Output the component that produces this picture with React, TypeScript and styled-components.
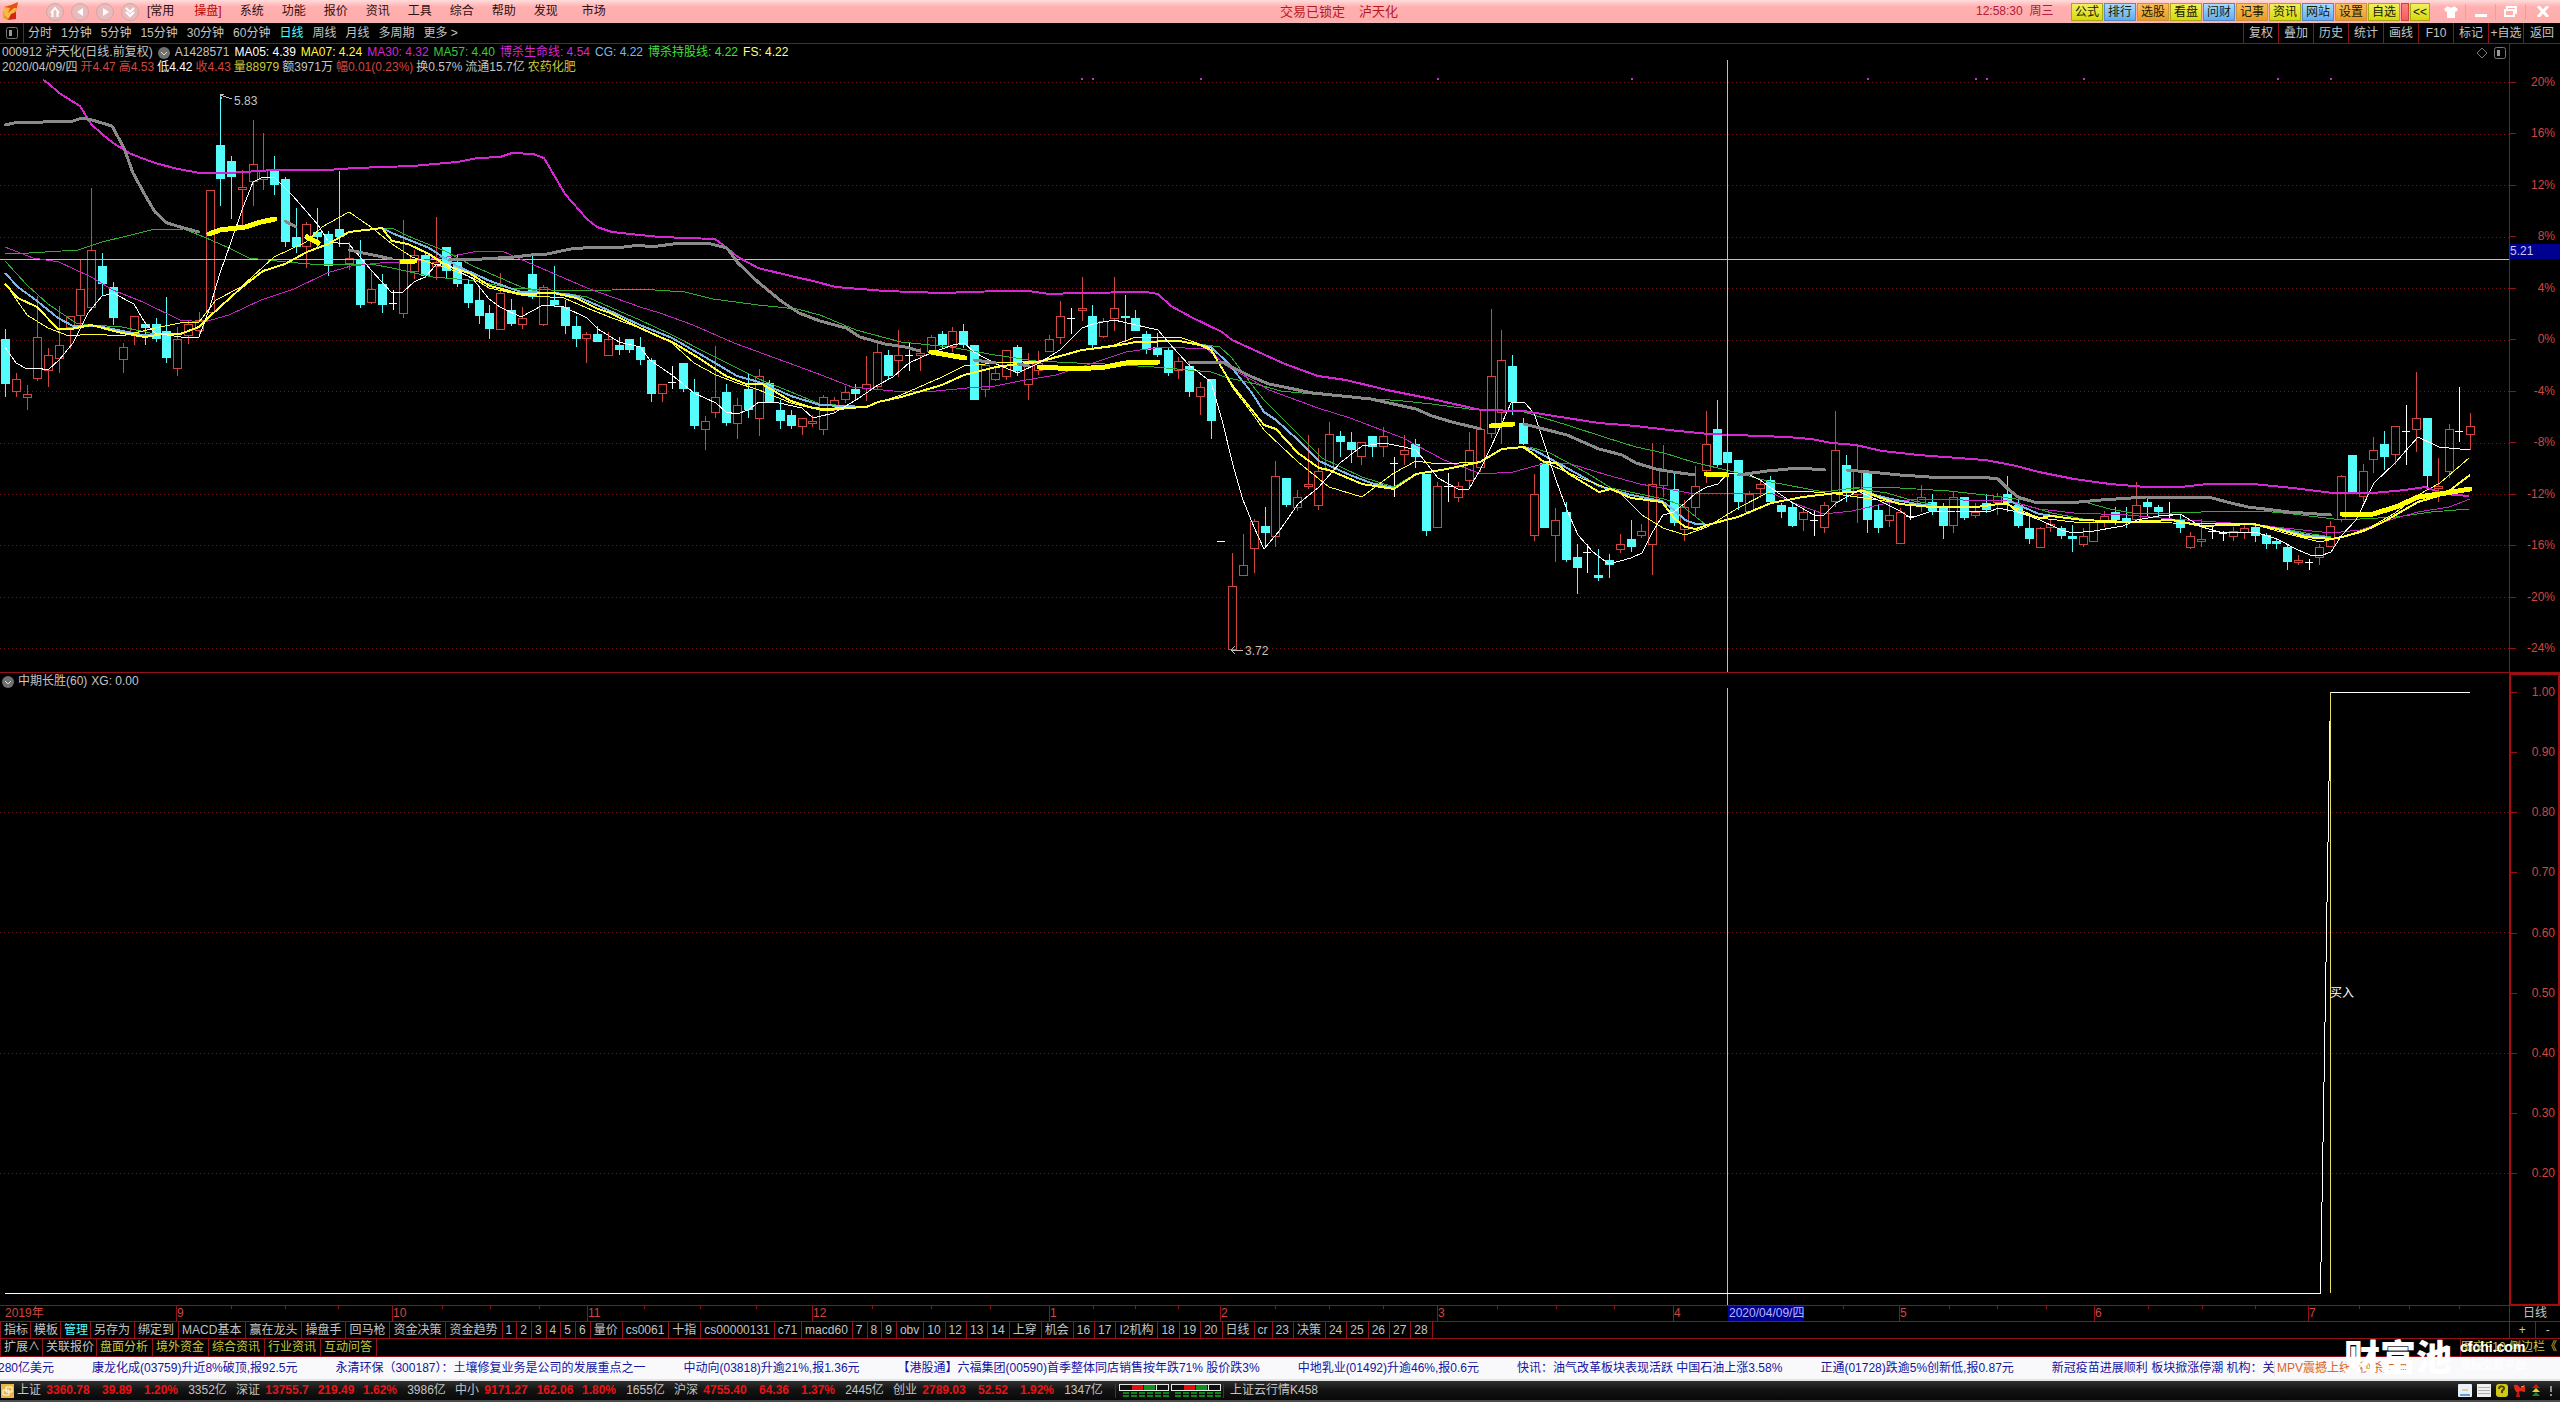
import React from 'react';
import styled, { createGlobalStyle, css } from 'styled-components';

const C = {
  line: '#941018',
  frame: '#a80c10',
  axis: '#d04640',
  text: '#c4c4c4',
  cyan: '#54fcfc',
  red: '#d04640',
  yellow: '#ffff38',
  olive: '#c8c840',
  magenta: '#d428d4',
  green: '#3cc83c',
  blue: '#7cb8e8',
  gray: '#8a8a8a',
};

const GlobalStyle = createGlobalStyle`
  * { box-sizing: border-box; }
  body {
    margin: 0;
    background: #000;
    color: ${C.text};
    font: 12px/15px "Liberation Sans", "Noto Sans CJK SC", sans-serif;
    overflow: hidden;
  }
  button {
    border: 0;
    padding: 0;
    margin: 0;
    background: none;
    color: inherit;
    font: inherit;
    white-space: nowrap;
  }
`;

const Shell = styled.div`
  display: flex;
  flex-direction: column;
  height: 100vh;
  white-space: nowrap;
`;

/* ---------- title bar ---------- */

const TitleBar = styled.header`
  display: flex;
  align-items: center;
  flex: none;
  height: 23px;
  padding-left: 2px;
  background: linear-gradient(#ffdcdc, #ffb0b0 30%, #ffadad 80%, #f4b4b4);
  color: #301010;
`;

const NavIcons = styled.div`
  display: flex;
  gap: 7px;
  margin: 0 8px 0 27px;
`;

const RoundButton = styled.button`
  display: flex;
  width: 18px;
  height: 18px;
  border-radius: 9px;
  background: #e8bcbc;
  border: 1px solid #d8a4a4;
`;

const Menu = styled.nav`
  display: flex;
  gap: 18px;
  flex: 1;
`;

const MenuItem = styled.button<{ $active?: boolean }>`
  color: ${(p) => (p.$active ? '#b80808' : '#301010')};
  &:first-child { margin-right: 2px; }
  &:last-child { margin-left: 6px; }
`;

const Caption = styled.div`
  display: flex;
  gap: 14px;
  flex: 0 0 696px;
  color: #b81820;
  font-size: 13px;
`;

const Clock = styled.time`
  flex: none;
  width: 95px;
  color: #b02038;
  font-size: 12px;
`;

const Tools = styled.div`
  display: flex;
  gap: 1px;
`;

const toolColor = {
  y: ['#f0f060', '#d8d810', '#a8a810'],
  b: ['#a8dcff', '#60acf0', '#5888c0'],
  o: ['#f8c060', '#e89c20', '#d09040'],
  r: ['#ff8080', '#f06060', '#d04040'],
};

const Tool = styled.button<{ $tone: keyof typeof toolColor; $width?: number }>`
  width: ${(p) => p.$width ?? 32}px;
  height: 18px;
  line-height: 17px;
  border: 1px solid ${(p) => toolColor[p.$tone][2]};
  background: linear-gradient(${(p) => toolColor[p.$tone][0]}, ${(p) => toolColor[p.$tone][1]});
  color: #181800;
`;

const WindowButtons = styled.div`
  display: flex;
  margin-left: 6px;
`;

const WindowButton = styled.button`
  display: flex;
  align-items: center;
  justify-content: center;
  width: 30px;
  height: 16px;
  border-right: 1px solid #e8a0a4;
  &:last-child { width: 34px; border: 0; }
`;

/* ---------- period bar ---------- */

const PeriodBar = styled.div`
  display: flex;
  flex: none;
  height: 21px;
  border-bottom: 1px solid ${C.line};
`;

const PanelToggle = styled.button`
  display: flex;
  align-items: center;
  justify-content: center;
  width: 24px;
  border: solid ${C.line};
  border-width: 0 1px 0 0;
`;

const Periods = styled.div`
  display: flex;
  gap: 9px;
  flex: 1;
  padding-left: 4px;
`;

const Period = styled.button<{ $active?: boolean }>`
  color: ${(p) => (p.$active ? C.cyan : C.text)};
`;

const SideCell = styled.button`
  width: 35px;
  border-left: 1px solid ${C.line};
  &:last-child { width: 37px; }
`;

/* ---------- charts ---------- */

const Charts = styled.main`
  display: grid;
  grid-template: minmax(0, 629fr) minmax(0, 632fr) / minmax(0, 1fr) 51px;
  flex: 1;
  min-height: 0;
`;

const Plot = styled.section<{ $line?: boolean }>`
  position: relative;
  min-height: 0;
  border-bottom: ${(p) => (p.$line ? 1 : 0)}px solid ${C.line};
`;

const PlotSvg = styled.svg`
  display: block;
  width: 100%;
  height: 100%;
`;

const Info = styled.div`
  position: absolute;
  top: 1px;
  left: 2px;
`;

const InfoLine = styled.div<{ $gap: number }>`
  display: flex;
  align-items: center;
  gap: ${(p) => p.$gap}px;
`;

const Tint = styled.span<{ $color: string }>`
  color: ${(p) => p.$color};
`;

const PlotButtons = styled.div`
  position: absolute;
  top: 3px;
  right: 3px;
  display: flex;
  gap: 6px;
`;

const Scale = styled.ol<{ $lower?: boolean }>`
  position: relative;
  display: flex;
  flex-direction: column;
  justify-content: space-between;
  margin: 0;
  padding: 31px 5px 16px 0;
  list-style: none;
  color: ${C.axis};
  border: solid ${C.line};
  border-width: 0 0 1px 1px;
  ${(p) =>
    p.$lower &&
    css`
      border: 2px solid ${C.frame};
      border-bottom-width: 1px;
      padding: 10px 3px 123px 0;
    `}
`;

const ScaleMark = styled.li`
  display: flex;
  align-items: center;
  justify-content: space-between;
  &::before {
    content: '';
    width: 6px;
    height: 1px;
    background: ${C.line};
  }
`;

const PriceTag = styled.output`
  position: absolute;
  top: 200px;
  left: 0;
  width: 50px;
  height: 15px;
  background: #000090;
  color: #c8c8ff;
`;

/* ---------- date axis ---------- */

const DateBar = styled.div`
  position: relative;
  display: flex;
  flex: none;
  height: 17px;
  border: solid ${C.line};
  border-width: 1px 0;
`;

const Months = styled.div`
  display: grid;
  grid-template-columns: 176fr 216fr 195fr 225fr 237fr 171fr 217fr 236fr 226fr 195fr 214fr 201fr;
  flex: 1;
`;

const Month = styled.div<{ $first?: boolean }>`
  display: grid;
  grid-template-columns: repeat(4, 1fr);
  border-left: ${(p) => (p.$first ? 0 : 1)}px solid ${C.line};
  padding-left: ${(p) => (p.$first ? 5 : 0)}px;
  color: ${C.axis};
`;

const Week = styled.i`
  height: 3px;
  border-left: 1px solid ${C.line};
`;

const CursorDate = styled.output`
  position: absolute;
  left: 67.5%;
  top: 0;
  height: 15px;
  padding-left: 1px;
  background: #000090;
  color: #b8b8ff;
`;

const Corner = styled.div`
  display: flex;
  width: 51px;
  border-left: 1px solid ${C.line};
  > * {
    flex: 1;
    text-align: center;
  }
  > * + * {
    border-left: 1px solid ${C.line};
  }
`;

/* ---------- tab rows ---------- */

const TabRow = styled.div<{ $height: number }>`
  display: flex;
  flex: none;
  height: ${(p) => p.$height}px;
  border-bottom: 1px solid ${C.line};
`;

const Tabs = styled.div`
  display: flex;
  flex: 1;
  border-left: 1px solid ${C.line};
`;

const Tab = styled.button<{ $color?: string; $tight?: boolean }>`
  padding: 0 ${(p) => (p.$tight ? 2 : 4)}px 0 3px;
  border-right: 1px solid ${C.line};
  color: ${(p) => p.$color ?? C.text};
`;

const SideTab = styled.button`
  width: 100px;
  border-left: 1px solid ${C.line};
  color: ${C.olive};
  text-align: left;
`;

/* ---------- ticker and status ---------- */

const Ticker = styled.div`
  display: flex;
  flex: none;
  height: 24px;
  align-items: center;
  border-bottom: 2px solid #e4e4e4;
  background: #f9f9fb;
  color: #1414a0;
`;

const News = styled.div`
  display: flex;
  gap: 38px;
  flex: 1 1 0;
  min-width: 0;
  margin-left: -2px;
  overflow: hidden;
`;

const NewsLink = styled.a`
  color: inherit;
  text-decoration: none;
`;

const Promo = styled.div`
  display: flex;
  gap: 8px;
  width: 286px;
  padding-left: 2px;
  border-left: 1px solid #e0e0e0;
  color: #d86428;
`;

const StatusBar = styled.footer`
  display: flex;
  flex: none;
  align-items: center;
  height: 21px;
  border-bottom: 2px solid #4c4c4c;
  background: linear-gradient(#303030, #141414 45%, #080808);
`;

const IndexQuote = styled.div`
  display: grid;
  grid-template-columns: 28px 46px 52px 36px 57px;
  text-align: center;
  > :first-child { text-align: left; }
`;

const Up = styled.b`
  color: #e81414;
`;

const Heat = styled.div`
  display: flex;
  gap: 2px;
  margin: 0 6px 0 3px;
  padding: 0 2px 0 3px;
  border: solid #383838;
  border-width: 0 1px;
`;

const Tray = styled.div`
  display: flex;
  align-items: center;
  gap: 5px;
  margin-left: auto;
  padding-right: 4px;
`;

const Watermark = styled.div`
  position: absolute;
  right: 33px;
  bottom: 26px;
  display: flex;
  gap: 8px;
  color: #fff;
  font-weight: 900;
  pointer-events: none;
`;

const Brand = styled.span`
  font: 900 36px/42px "Noto Sans CJK SC", sans-serif;
`;

const BrandSite = styled.span`
  display: flex;
  flex-direction: column;
  width: 67px;
  padding-top: 4px;
  font-size: 14px;
  line-height: 18px;
  small {
    font-size: 11px;
    font-weight: 400;
  }
`;

/* ---------- data ---------- */

/* One candle per trading day: kind, high, body top, body bottom, low.
   r = rising (hollow), c = falling (solid), w = unchanged, d = limit without trades. */
const CANDLES = `
c,329,339,384,397 r,373,379,392,397 r,385,394,398,410 r,296,337,379,381 r,348,355,371,387 r,306,345,359,373
r,316,316,328,349 r,260,289,316,327 r,188,250,308,310 c,253,266,284,295 c,282,287,318,325 r,343,347,360,373
r,316,316,334,345 c,322,324,328,345 c,318,324,339,342 c,297,331,358,363 r,327,339,369,376 r,320,324,336,344
r,312,320,331,337 r,190,190,313,313 c,95,145,179,206 c,156,161,177,219 r,170,187,190,225 r,120,164,182,206
r,133,170,180,190 c,156,169,185,195 c,177,179,242,247 c,208,237,247,253 r,222,224,247,268 c,208,232,237,247
c,231,234,266,276 c,171,229,237,247 r,242,258,264,270 c,240,259,305,308 r,270,289,303,304 c,274,284,305,313
w,290,303,303,310 r,220,259,314,318 r,250,255,272,279 c,252,255,276,278 r,217,262,267,280 c,247,247,271,279
c,254,262,284,287 c,280,284,303,308 c,288,300,316,324 c,305,313,329,339 r,273,293,330,330 c,299,310,324,326
r,307,318,325,329 c,256,274,297,299 r,285,287,325,326 c,266,300,305,306 c,300,307,326,334 c,316,326,339,347
r,332,334,339,363 c,326,334,342,342 r,332,339,356,356 c,337,345,350,355 c,339,339,350,353 c,337,347,360,365
c,358,360,394,402 r,384,384,394,402 w,366,382,382,389 c,363,363,389,392 c,379,392,426,429 r,416,421,430,450
r,346,397,413,418 c,384,392,423,426 r,398,405,424,439 c,373,389,410,418 r,369,376,419,436 c,380,383,402,403
c,400,410,421,429 c,410,415,426,429 r,418,418,427,435 r,415,421,424,427 r,395,397,430,435 r,397,400,406,413
r,386,392,400,403 c,384,389,394,400 r,356,384,389,401 r,340,352,387,390 c,350,355,376,379 r,330,355,361,377
w,342,355,355,371 r,348,353,356,371 r,335,337,352,353 c,331,334,345,348 r,327,331,347,352 c,324,331,345,348
c,345,345,400,400 r,360,365,390,397 r,368,373,380,381 r,350,350,377,380 c,345,347,371,376 r,353,363,385,400
r,351,363,371,375 r,335,339,352,352 r,301,316,338,344 w,308,318,318,334 r,277,308,311,321 c,305,316,345,348
r,318,321,337,338 r,277,308,319,331 c,295,316,318,342 c,310,318,331,331 c,331,334,350,354 c,333,347,355,357
c,348,350,373,376 r,357,361,371,379 c,362,366,392,397 r,382,387,397,415 c,379,379,421,439 d,541,541,541,541
r,553,586,650,650 r,534,565,576,576 r,519,521,549,573 c,507,526,533,548 r,461,476,537,547 c,478,478,505,507
r,490,497,508,511 r,435,484,486,489 r,448,471,506,510 r,422,434,471,471 c,431,436,442,457 c,432,442,450,463
r,442,442,457,465 c,436,436,447,457 r,427,436,447,457 w,457,463,463,497 r,435,450,455,465 c,439,444,457,468
c,474,474,531,536 r,482,486,528,528 w,473,486,486,502 r,482,486,498,502 r,432,450,481,488 r,410,429,468,472
r,309,376,434,438 r,330,360,413,444 c,355,366,402,415 c,418,423,444,445 r,474,494,536,541 c,463,463,528,528
r,508,520,536,562 c,502,512,560,562 c,544,557,568,594 w,544,552,552,573 c,549,575,578,581 c,554,560,565,578
r,534,544,550,553 c,520,539,547,552 r,524,531,536,538 r,443,484,545,575 r,445,471,486,497 c,472,489,523,526
r,500,507,530,541 r,466,486,508,517 r,411,444,471,483 c,400,429,465,467 c,433,452,463,464 c,460,460,502,510
r,491,494,512,514 r,480,484,489,498 c,476,480,502,503 c,503,505,512,518 c,503,507,526,527 r,510,512,520,531
w,511,520,520,536 r,502,505,528,533 r,411,450,502,507 c,455,465,492,502 r,444,470,495,523 c,471,472,520,533
c,505,510,528,533 r,503,515,521,527 r,508,512,544,544 w,502,516,516,520 r,485,497,505,512 c,494,502,511,515
c,503,507,526,539 r,491,497,526,533 c,497,497,518,520 r,503,512,516,518 c,494,503,510,513 r,493,496,503,515
c,476,494,503,512 c,495,505,526,528 c,514,528,539,544 r,527,528,548,548 r,520,524,528,532 c,526,528,536,539
c,525,536,539,552 r,528,536,545,547 r,520,522,542,542 r,511,516,523,527 c,507,512,520,525 c,507,518,523,528
r,482,505,520,522 c,498,502,507,516 c,505,507,512,516 w,502,515,515,518 c,515,519,528,533 r,532,536,548,549
r,519,539,542,547 w,527,531,531,539 w,531,533,533,541 r,527,531,537,541 r,523,528,533,539 c,525,527,536,542
c,533,535,544,549 c,538,541,544,549 c,544,547,562,570 r,555,560,563,565 w,559,562,562,570 r,544,547,558,565
r,521,526,547,547 r,475,476,520,522 c,455,455,492,492 r,464,471,497,502 r,437,450,460,473 c,431,444,457,470
r,426,426,455,465 w,405,431,431,465 r,372,418,430,452 c,418,418,476,487 r,458,486,488,502 r,424,429,472,478
w,387,431,431,442 r,413,426,435,450`
  .trim()
  .split(/\s+/)
  .map((row) => {
    const [kind, ...v] = row.split(',');
    const [high, top, bottom, low] = v.map(Number);
    return { kind, high, top, bottom, low };
  });

const LINES: { color: string; width: number; points: string[] }[] = [
  {
    color: '#30b030',
    width: 1,
    points: [
      '5,254 29,253 78,250 102,242 127,236 151,230 184,229 204,237 229,248 249,258 286,262 310,264 371,264 392,268 433,277 469,280 510,288 551,290 571,291 612,290 640,289 685,292 713,299 758,305 797,309 820,315 856,330 901,342 950,347 995,355 1036,361 1077,363 1105,364 1154,367 1211,372 1228,378 1252,383 1281,391 1322,395 1403,401 1432,404 1469,409 1481,410 1524,412 1567,425 1607,438 1636,447 1664,453 1693,462 1730,471 1771,482 1824,492 1860,487 1900,488 1949,491 1994,496 2030,501 2061,502 2088,503 2110,509 2132,513 2172,513 2231,511 2262,511 2293,514 2342,520 2396,517 2431,512 2469,509',
    ],
  },
  {
    color: '#30b030',
    width: 1,
    points: [
      '5,261 27,285 48,304 76,323 91,325 122,327 155,334',
      '382,228 392,228 408,236 445,251 473,266 521,287 543,293 564,293 587,297 612,308 640,320 672,335 705,352 759,379 791,392 820,404 867,407',
      '1179,341 1220,347 1232,358 1252,385 1264,400 1287,423 1322,458 1362,477 1394,487 1410,477',
      '1530,447 1550,453 1587,473 1611,488 1664,499 1681,505 1696,517 1705,524',
      '1852,488 1887,493 1914,501 1931,504',
      '2007,500 2052,513 2083,519',
      '2262,525 2306,533 2331,537',
    ],
  },
  {
    color: '#c028c0',
    width: 1,
    points: [
      '5,247 33,258 59,262 91,277 113,290 143,302 180,320 204,322 229,315 261,300 294,289 327,273 351,266 380,263 408,262 447,257 473,252 502,251 527,262 564,278 587,288 640,307 660,313 693,325 734,343 775,358 816,373 852,387 893,391 926,392 967,388 995,386 1020,381 1056,375 1093,363 1126,352 1162,347 1207,349 1228,367 1252,380 1269,390 1318,408 1350,418 1403,438 1444,460 1481,474 1513,472 1546,463 1571,464 1607,475 1640,484 1689,493 1771,493 1799,505 1824,514 1852,511 1887,503 1918,499 1963,500 2007,500 2039,509 2074,513 2128,515 2172,519 2231,523 2275,527 2331,533 2360,530 2396,518 2418,512 2449,507 2470,499',
    ],
  },
  {
    color: C.blue,
    width: 2,
    points: [
      '5,273 18,287 37,301 58,318 73,326 98,326 122,331 143,335 160,334',
      '382,228 392,233 429,248 457,266 490,281 521,292 555,293 576,296 608,310 640,325 672,338 705,357 737,376 759,382 791,396 820,405 867,407',
      '1179,341 1211,347 1228,363 1252,393 1264,412 1276,420 1298,440 1319,461 1350,475 1371,483 1394,488',
      '1524,447 1534,450 1567,468 1599,486 1631,495 1662,501 1674,510 1685,520 1696,524 1705,524',
      '1860,490 1882,497 1911,503 1931,506',
      '2007,500 2039,514 2061,517',
      '2275,528 2306,535 2331,538',
    ],
  },
  {
    color: C.yellow,
    width: 1,
    points: [
      '5,283 27,315 48,328 69,336 91,334 122,336 155,328 180,323 199,322 216,300 241,287 274,257 306,242 322,227 349,212 371,227 392,244 412,257 447,268 473,278 489,288 521,295 564,298 587,308 612,318 640,328 672,343 694,363 716,375 737,383 759,390 791,403 824,411 864,407 901,395 942,377 964,366 996,363 1039,361 1082,350 1114,345 1136,337 1179,337 1211,348 1232,387 1252,413 1264,430 1298,462 1329,487 1362,497 1394,473 1416,461 1438,464 1480,462 1502,449 1522,447 1546,463 1578,477 1620,493 1642,515 1663,528 1685,535 1707,527 1738,508 1771,491 1803,491 1836,494 1878,500 1911,505 1955,508 2007,504 2039,518 2074,522 2128,522 2172,523 2253,524 2284,533 2320,542 2342,537 2369,528 2395,513 2418,495 2440,483 2469,458',
    ],
  },
  {
    color: C.yellow,
    width: 2,
    points: [
      '5,284 18,298 37,307 58,329 71,329 91,325 122,333 145,337 163,334 180,334 199,327 209,317 241,288 263,271 285,264 307,252 328,244 349,232 382,228 392,241 408,244 429,254 447,266 469,273 490,286 521,294 554,293 576,298 598,309 608,312 640,328 660,337 672,342 694,355 726,376 746,384 762,384 791,401 813,408 824,409 867,407 878,402 901,397 942,385 964,375 996,367 1018,364 1039,362 1082,350 1114,346 1136,342 1179,341 1200,345 1211,350 1232,385 1264,425 1276,429 1298,453 1319,468 1329,470 1362,484 1394,489 1416,474 1447,469 1480,462 1502,449 1524,447 1544,462 1556,463 1569,474 1599,492 1611,489 1631,498 1662,502 1674,518 1685,527 1696,529 1707,525 1738,517 1771,503 1803,497 1836,493 1864,491 1878,497 1900,504 1931,507 1976,507 2007,503 2018,512 2040,518 2051,516 2083,520 2128,522 2172,520 2202,526 2253,524 2277,529 2306,537 2331,539 2342,537 2364,531 2385,521 2418,502 2445,494 2470,475',
    ],
  },
  {
    color: '#ffffff',
    width: 1,
    points: [
      '5,347 16,363 27,369 37,368 48,370 59,360 73,343 88,313 102,296 113,293 134,304 145,323 155,333 167,335 188,338 199,337 209,310 220,273 231,242 242,210 253,182 263,177 274,177 292,195 307,212 318,225 328,241 338,243 349,244 360,257 371,270 392,293 403,292 414,282 425,277 436,265 445,263 457,270 473,279 489,299 500,307 521,317 543,305 564,307 587,318 598,329 619,342 640,347 650,360 672,375 694,393 716,403 726,412 737,414 748,410 759,402 779,403 802,408 813,418 834,413 856,400 878,385 893,377 909,363 931,353 953,345 964,343 974,352 996,364 1018,373 1039,363 1060,350 1082,328 1093,324 1114,320 1136,325 1158,330 1169,343 1189,365 1211,382 1222,420 1233,465 1243,500 1254,527 1264,549 1280,530 1298,504 1319,487 1340,463 1362,446 1384,443 1404,447 1416,450 1438,478 1458,489 1469,489 1480,470 1491,447 1502,423 1511,403 1524,402 1534,413 1544,443 1556,480 1567,510 1578,535 1593,552 1609,564 1631,558 1642,553 1652,533 1663,515 1674,512 1685,503 1696,493 1707,487 1718,484 1727,474 1746,473 1760,480 1771,488 1793,503 1814,515 1824,515 1836,503 1858,491 1882,502 1900,511 1911,518 1932,511 1955,511 1989,512 1998,508 2018,512 2040,520 2061,530 2073,533 2094,531 2123,526 2137,520 2159,516 2180,514 2202,527 2223,533 2255,532 2277,539 2298,550 2310,555 2320,556 2331,552 2342,535 2356,520 2374,483 2395,463 2418,437 2439,447 2470,450',
    ],
  },
  {
    color: C.magenta,
    width: 2,
    points: [
      '43,80 48,83 59,93 80,106 91,124 102,134 113,143 131,154 155,163 178,169 200,173 229,173 274,170 327,170 355,168 412,166 457,162 478,158 500,157 512,153 533,154 544,158 565,194 587,219 597,227 612,232 640,235 660,237 715,239 727,248 738,257 758,268 791,276 813,281 836,287 885,291 942,293 999,291 1028,291 1050,294 1077,293 1146,292 1158,294 1171,306 1191,317 1222,332 1232,340 1285,364 1318,376 1346,380 1387,390 1432,399 1481,410 1524,411 1554,416 1599,423 1636,426 1669,430 1709,434 1787,437 1811,439 1832,443 1856,445 1882,451 1918,455 1985,460 2012,465 2039,472 2074,479 2110,484 2146,487 2181,487 2208,484 2253,484 2293,488 2333,493 2373,493 2405,490 2425,487 2445,494 2469,496',
    ],
  },
  {
    color: C.gray,
    width: 3,
    points: [
      '5,125 14,123 73,121 82,118 92,120 112,126 124,148 133,173 145,195 155,212 167,223 184,228 199,232',
      '285,221 296,227',
      '349,250 392,259',
      '449,260 482,259 514,257 531,255 547,254 571,249 596,247 616,248 640,245 650,247 681,243 707,243 727,248 738,263 758,282 781,301 799,313 820,321 846,328 860,337 885,344 905,347 920,351',
      '974,360 996,363',
      '1018,364 1029,366',
      '1189,362 1223,362 1232,367 1252,377 1269,384 1313,393 1371,399 1416,409 1432,416 1452,422 1481,429',
      '1524,424 1567,435 1599,449 1622,455 1636,463 1656,469 1673,472 1695,475',
      '1738,475 1767,471 1799,468 1825,470',
      '1847,470 1880,473 1900,475 1929,477 1945,477 1981,477 1998,479 2007,488 2018,497 2034,502 2079,502 2101,500 2146,497 2188,498 2208,497 2231,503 2248,507 2289,512 2331,515',
    ],
  },
  {
    color: '#ffff00',
    width: 5,
    points: [
      '209,234 220,230 245,227 261,222 275,219',
      '307,237 318,243',
      '402,262 415,261',
      '931,352 965,358',
      '1039,367 1077,369 1105,367 1126,363 1158,362',
      '1491,426 1513,424',
      '1706,474 1727,475',
      '2342,514 2373,514 2396,507 2418,497 2440,494 2470,489',
    ],
  },
];

const GRID_Y = [82, 134, 185, 237, 288, 340, 391, 443, 494, 545, 597, 648];
const SIGNAL_X = [1081, 1092, 1200, 1437, 1631, 1867, 1975, 1986, 2083, 2277, 2330];

const PERCENTS = ['20%', '16%', '12%', '8%', '4%', '0%', '-4%', '-8%', '-12%', '-16%', '-20%', '-24%'];
const LEVELS = ['1.00', '0.90', '0.80', '0.70', '0.60', '0.50', '0.40', '0.30', '0.20'];

const MENU = ['[常用', '操盘]', '系统', '功能', '报价', '资讯', '工具', '综合', '帮助', '发现', '市场'];
const TOOLS: [string, keyof typeof toolColor, number?][] = [
  ['公式', 'y'], ['排行', 'b'], ['选股', 'o'], ['看盘', 'y'], ['问财', 'b'], ['记事', 'o'],
  ['资讯', 'y'], ['网站', 'b'], ['设置', 'o'], ['自选', 'y'], ['', 'r', 8], ['<<', 'y', 20],
];
const PERIODS = ['分时', '1分钟', '5分钟', '15分钟', '30分钟', '60分钟', '日线', '周线', '月线', '多周期', '更多 >'];
const SIDE = ['复权', '叠加', '历史', '统计', '画线', 'F10', '标记', '+自选', '返回'];

const LEGEND: [string, string][] = [
  ['A1428571', C.text],
  ['MA05: 4.39', '#ffffff'],
  ['MA07: 4.24', C.yellow],
  ['MA30: 4.32', C.magenta],
  ['MA57: 4.40', C.green],
  ['博杀生命线: 4.54', C.magenta],
  ['CG: 4.22', C.blue],
  ['博杀持股线: 4.22', '#40e040'],
  ['FS: 4.22', '#ffff80'],
];
const DAY: [string, string][] = [
  ['2020/04/09/四', C.text],
  ['开4.47', C.red],
  ['高4.53', C.red],
  ['低4.42', '#ffffff'],
  ['收4.43', C.red],
  ['量88979', C.olive],
  ['额3971万', C.text],
  ['幅0.01(0.23%)', C.red],
  ['换0.57%', C.text],
  ['流通15.7亿', C.text],
  ['农药化肥', C.olive],
];

const MONTHS = ['2019年', '9', '10', '11', '12', '1', '2', '3', '4', '5', '6', '7'];
const MODES = ['指标', '模板', '管理'];
const TEMPLATES = [
  '另存为', '绑定到', 'MACD基本', '赢在龙头', '操盘手', '回马枪', '资金决策', '资金趋势', '1', '2', '3', '4', '5', '6',
  '量价', 'cs0061', '十指', 'cs00000131', 'c71', 'macd60', '7', '8', '9', 'obv', '10', '12', '13', '14', '上穿', '机会',
  '16', '17', 'I2机构', '18', '19', '20', '日线', 'cr', '23', '决策', '24', '25', '26', '27', '28',
];
const LINKS = ['盘面分析', '境外资金', '综合资讯', '行业资讯', '互动问答'];

const NEWS = [
  '280亿美元',
  '康龙化成(03759)升近8%破顶,报92.5元',
  '永清环保（300187）：土壤修复业务是公司的发展重点之一',
  '中动向(03818)升逾21%,报1.36元',
  '【港股通】六福集团(00590)首季整体同店销售按年跌71% 股价跌3%',
  '中地乳业(01492)升逾46%,报0.6元',
  '快讯：油气改革板块表现活跃 中国石油上涨3.58%',
  '正通(01728)跌逾5%创新低,报0.87元',
  '新冠疫苗进展顺利 板块掀涨停潮 机构：关',
];

const INDEXES = [
  ['上证', '3360.78', '39.89', '1.20%', '3352亿'],
  ['深证', '13755.7', '219.49', '1.62%', '3986亿'],
  ['中小', '9171.27', '162.06', '1.80%', '1655亿'],
  ['沪深', '4755.40', '64.36', '1.37%', '2445亿'],
  ['创业', '2789.03', '52.52', '1.92%', '1347亿'],
];

/* ---------- drawings ---------- */

const Logo = () => (
  <svg width="17" height="19" viewBox="0 0 17 19" aria-hidden="true">
    <path d="M1 9 8 13 6 18 1 16z" fill="#f0a020" />
    <path d="M2 5 9 3l7-3-1 6-3 8-6 4-4-5z" fill="#e85010" />
    <path d="M2 5l6 1-2 5 6-5 3 0-5 9-4 2-4-4z" fill="#f8b848" />
    <path d="M9 12l5-2v7l-8 1z" fill="#d02810" />
  </svg>
);

const NAV_PATHS = ['M4 9l4-5 4 5M5.5 8v5M10.5 8v5', 'M11 4v8L5 8z', 'M6 4v8l6-4z', 'M4 4l4 4 4-4M4 8l4 4 4-4'];

const NavIcon = ({ index }: { index: number }) => (
  <svg width="16" height="16" viewBox="0 0 16 16" aria-hidden="true">
    <path
      d={NAV_PATHS[index]}
      fill={index === 1 || index === 2 ? '#fff' : 'none'}
      stroke="#fff"
      strokeWidth={index === 1 || index === 2 ? 0 : 2}
    />
  </svg>
);

const Chevron = () => (
  <svg width="12" height="12" viewBox="0 0 12 12" aria-hidden="true">
    <circle cx="6" cy="6" r="6" fill="#707070" />
    <path d="M3 5l3 3 3-3" fill="none" stroke="#e0e0e0" />
  </svg>
);

const PanelIcon = () => (
  <svg width="12" height="12" viewBox="0 0 12 12" aria-hidden="true">
    <rect x="0.5" y="0.5" width="11" height="11" rx="2" fill="none" stroke="#787878" />
    <rect x="3" y="3" width="3" height="6" fill="#989898" />
  </svg>
);

const HeatIcon = () => (
  <svg width="50" height="14" viewBox="0 0 50 14" shapeRendering="crispEdges" aria-hidden="true">
    <rect x="0.5" y="0.5" width="49" height="6" fill="#101010" stroke="#e8e8e8" />
    <rect x="13" y="1" width="11" height="5" fill="#e01010" />
    <rect x="25" y="1" width="11" height="5" fill="#109020" />
    <path d="M37.5 1v5" stroke="#e8e8e8" />
    {[0, 1, 2, 3, 4, 5].map((n) => (
      <g key={n} fill="#0c8818">
        <rect x={4 + n * 8} y="8" width="6" height="2" />
        <rect x={4 + n * 8} y="11" width="6" height="2" />
      </g>
    ))}
  </svg>
);

const CandleMark = ({ index }: { index: number }) => {
  const { kind, high, top, bottom, low } = CANDLES[index];
  const x = Math.round(5 + index * 10.765);
  if (kind === 'w' || kind === 'd') {
    return (
      <path
        d={`M${x - 4} ${top + 0.5}h8${kind === 'w' ? `M${x + 0.5} ${high}V${low}` : ''}`}
        stroke="#ffffff"
        fill="none"
      />
    );
  }
  if (kind === 'c') {
    return (
      <g fill={C.cyan}>
        <rect x={x} y={high} width="1" height={low - high} />
        <rect x={x - 4} y={top} width="9" height={Math.max(bottom - top, 2)} />
      </g>
    );
  }
  return (
    <g fill="none" stroke={C.red}>
      <path d={`M${x + 0.5} ${high}V${top}M${x + 0.5} ${bottom}V${low}`} />
      <rect x={x - 3.5} y={top + 0.5} width="8" height={Math.max(bottom - top - 1, 2)} />
    </g>
  );
};

const PriceChart = () => (
  <PlotSvg viewBox="0 44 2509 628" preserveAspectRatio="none" shapeRendering="crispEdges">
    {GRID_Y.map((y) => (
      <path key={y} d={`M0 ${y + 0.5}H2509`} stroke="#701818" strokeDasharray="1 3" />
    ))}
    {SIGNAL_X.map((x) => (
      <rect key={x} x={x} y="78" width="2" height="2" fill="#b040b0" />
    ))}
    {CANDLES.map((_, i) => (
      <CandleMark key={i} index={i} />
    ))}
    <path d="M0 259.5H2509" stroke="#c0c0c0" />
    {LINES.map((line) =>
      line.points.map((points) => (
        <polyline
          key={points}
          points={points}
          fill="none"
          stroke={line.color}
          strokeWidth={line.width}
          strokeLinecap={line.width > 2 ? 'round' : 'butt'}
          strokeLinejoin="round"
        />
      )),
    )}
    <path d="M1727.5 60V672" stroke="#c0c0c0" />
    <path d="M220 95l12 4M220 95l4 -1M220 95l2 4M1231 650h12M1231 650l4-4M1231 650l4 4" stroke="#c0c0c0" fill="none" />
    <text x="234" y="105" fill={C.text}>5.83</text>
    <text x="1245" y="655" fill={C.text}>3.72</text>
  </PlotSvg>
);

const SignalChart = () => (
  <PlotSvg viewBox="0 673 2509 632" preserveAspectRatio="none" shapeRendering="crispEdges">
    {[812, 932, 1053, 1173].map((y) => (
      <path key={y} d={`M0 ${y + 0.5}H2509`} stroke="#701818" strokeDasharray="1 3" />
    ))}
    <path d="M1727.5 688V1305" stroke="#c0c0c0" />
    <path d="M5 1293.5H2320.5L2330.5 692.5H2470" stroke="#ffffff" fill="none" />
    <path d="M2330.5 692V1293" stroke="#e8e060" />
    <text x="2330" y="997" fill="#ffffff">买入</text>
  </PlotSvg>
);

export default function App() {
  return (
    <Shell>
      <GlobalStyle />
      <TitleBar>
        <Logo />
        <NavIcons>
          {['主页', '后退', '前进', '更多'].map((label, i) => (
            <RoundButton key={label} aria-label={label}>
              <NavIcon index={i} />
            </RoundButton>
          ))}
        </NavIcons>
        <Menu>
          {MENU.map((item, i) => (
            <MenuItem key={item} $active={i === 1}>{item}</MenuItem>
          ))}
        </Menu>
        <Caption>
          <span>交易已锁定</span>
          <span>泸天化</span>
        </Caption>
        <Clock>12:58:30&nbsp; 周三</Clock>
        <Tools>
          {TOOLS.map(([label, tone, width], i) => (
            <Tool key={i} $tone={tone} $width={width} aria-label={label || '分隔'}>{label}</Tool>
          ))}
        </Tools>
        <WindowButtons>
          <WindowButton aria-label="换肤">
            <svg width="14" height="12" viewBox="0 0 14 12">
              <path d="M4 0 0 3l2 3 1-1v7h8V5l1 1 2-3-4-3C9 2 5 2 4 0z" fill="#fff" />
            </svg>
          </WindowButton>
          <WindowButton aria-label="最小化">
            <svg width="12" height="12" viewBox="0 0 12 12"><path d="M0 8h12v3H0z" fill="#fff" /></svg>
          </WindowButton>
          <WindowButton aria-label="还原">
            <svg width="13" height="11" viewBox="0 0 13 11">
              <path d="M3 3V1h9v6h-2M1 4h9v6H1z" fill="none" stroke="#fff" strokeWidth="2" />
            </svg>
          </WindowButton>
          <WindowButton aria-label="关闭">
            <svg width="12" height="11" viewBox="0 0 12 11">
              <path d="M1 0l10 11M11 0 1 11" stroke="#fff" strokeWidth="3" />
            </svg>
          </WindowButton>
        </WindowButtons>
      </TitleBar>

      <PeriodBar>
        <PanelToggle aria-label="侧栏"><PanelIcon /></PanelToggle>
        <Periods>
          {PERIODS.map((p) => (
            <Period key={p} $active={p === '日线'}>{p}</Period>
          ))}
        </Periods>
        {SIDE.map((s) => (
          <SideCell key={s}>{s}</SideCell>
        ))}
      </PeriodBar>

      <Charts>
        <Plot $line>
          <PriceChart />
          <Info>
            <InfoLine $gap={5}>
              <span>000912 泸天化(日线.前复权)</span>
              <Chevron />
              {LEGEND.map(([text, color]) => (
                <Tint key={text} $color={color}>{text}</Tint>
              ))}
            </InfoLine>
            <InfoLine $gap={3}>
              {DAY.map(([text, color]) => (
                <Tint key={text} $color={color}>{text}</Tint>
              ))}
            </InfoLine>
          </Info>
          <PlotButtons>
            <svg width="12" height="12" viewBox="0 0 12 12" aria-hidden="true">
              <path d="M6 1l5 5-5 5-5-5z" fill="none" stroke="#787878" />
            </svg>
            <PanelIcon />
          </PlotButtons>
        </Plot>
        <Scale>
          {PERCENTS.map((p) => (
            <ScaleMark key={p}>{p}</ScaleMark>
          ))}
          <PriceTag as="li">5.21</PriceTag>
        </Scale>
        <Plot>
          <SignalChart />
          <Info>
            <InfoLine $gap={4}>
              <Chevron />
              <span>中期长胜(60)</span>
              <span>XG: 0.00</span>
            </InfoLine>
          </Info>
        </Plot>
        <Scale $lower>
          {LEVELS.map((l) => (
            <ScaleMark key={l}>{l}</ScaleMark>
          ))}
        </Scale>
      </Charts>

      <DateBar>
        <Months>
          {MONTHS.map((m, i) => (
            <Month key={m} $first={i === 0}>
              <span>{m}</span>
              {i > 0 && [0, 1, 2].map((n) => <Week key={n} />)}
            </Month>
          ))}
        </Months>
        <CursorDate>2020/04/09/四</CursorDate>
        <Corner><span>日线</span></Corner>
      </DateBar>

      <TabRow $height={17}>
        <Tabs>
          {MODES.map((m) => (
            <Tab key={m} $tight $color={m === '管理' ? C.cyan : undefined}>{m}</Tab>
          ))}
          {TEMPLATES.map((t) => (
            <Tab key={t}>{t}</Tab>
          ))}
        </Tabs>
        <Corner>
          <button>+</button>
          <button>-</button>
        </Corner>
      </TabRow>
      <TabRow $height={18}>
        <Tabs>
          <Tab $tight>扩展∧</Tab>
          <Tab $tight>关联报价</Tab>
          {LINKS.map((l) => (
            <Tab key={l} $color={C.olive}>{l}</Tab>
          ))}
        </Tabs>
        <SideTab>图文F10 侧边栏《</SideTab>
      </TabRow>

      <Ticker>
        <News>
          {NEWS.map((n) => (
            <NewsLink key={n} href="#">{n}</NewsLink>
          ))}
        </News>
        <Promo>
          <span>MPV震撼上线</span>
          <span>秒杀主顶</span>
        </Promo>
      </Ticker>

      <StatusBar>
        <svg width="17" height="16" viewBox="0 0 17 16" aria-hidden="true">
          <rect x="1" y="1" width="13" height="14" fill="#e8b840" />
          <path d="M6 4h6v5H6zM3 7h6v5H3z" fill="#e8b840" stroke="#fff" />
        </svg>
        {INDEXES.map(([name, value, change, pct, amount]) => (
          <IndexQuote key={name}>
            <span>{name}</span>
            <Up>{value}</Up>
            <Up>{change}</Up>
            <Up>{pct}</Up>
            <span>{amount}</span>
          </IndexQuote>
        ))}
        <Heat>
          <HeatIcon />
          <HeatIcon />
        </Heat>
        <span>上证云行情K458</span>
        <Tray>
          <svg width="14" height="13" viewBox="0 0 14 13">
            <rect width="14" height="13" rx="1" fill="#e8f0f8" />
            <path d="M2 11h10" stroke="#60a0e0" strokeWidth="2" />
            <path d="M4 6h6" stroke="#e0a840" />
          </svg>
          <svg width="14" height="13" viewBox="0 0 14 13">
            <rect width="14" height="13" fill="#f0f0f0" />
            <path d="M1 3.5h12M1 6.5h12M1 9.5h12" stroke="#b0b0b0" />
          </svg>
          <svg width="12" height="13" viewBox="0 0 12 13">
            <rect width="12" height="13" rx="3" fill="#d0c818" />
            <path d="M3 5c0-4 6-3 5 0L6 7v2" fill="none" stroke="#504800" strokeWidth="2" />
          </svg>
          <svg width="13" height="14" viewBox="0 0 13 14">
            <path d="M1 1c4-1 5 1 6 3l5-3v7L7 7C5 10 1 8 1 1z" fill="#e02818" />
            <path d="M4 8l-1 5h4L6 8z" fill="#c01810" />
            <path d="M8 3l3-1" stroke="#ff9080" />
          </svg>
          <svg width="10" height="13" viewBox="0 0 10 13">
            <path d="M5 0l4 4H1z" fill="#e01010" />
            <path d="M5 4l4 4H1z" fill="#e8d020" />
            <path d="M5 8l4 4H1z" fill="#109020" />
          </svg>
          <svg width="10" height="12" viewBox="0 0 10 12">
            <path d="M5 1v6M5 9v2" stroke="#909090" strokeWidth="2" />
          </svg>
        </Tray>
      </StatusBar>
      <Watermark>
        <Brand>财富池</Brand>
        <BrandSite>
          cfchi.com
          <small>指标交易平台</small>
        </BrandSite>
      </Watermark>
    </Shell>
  );
}
